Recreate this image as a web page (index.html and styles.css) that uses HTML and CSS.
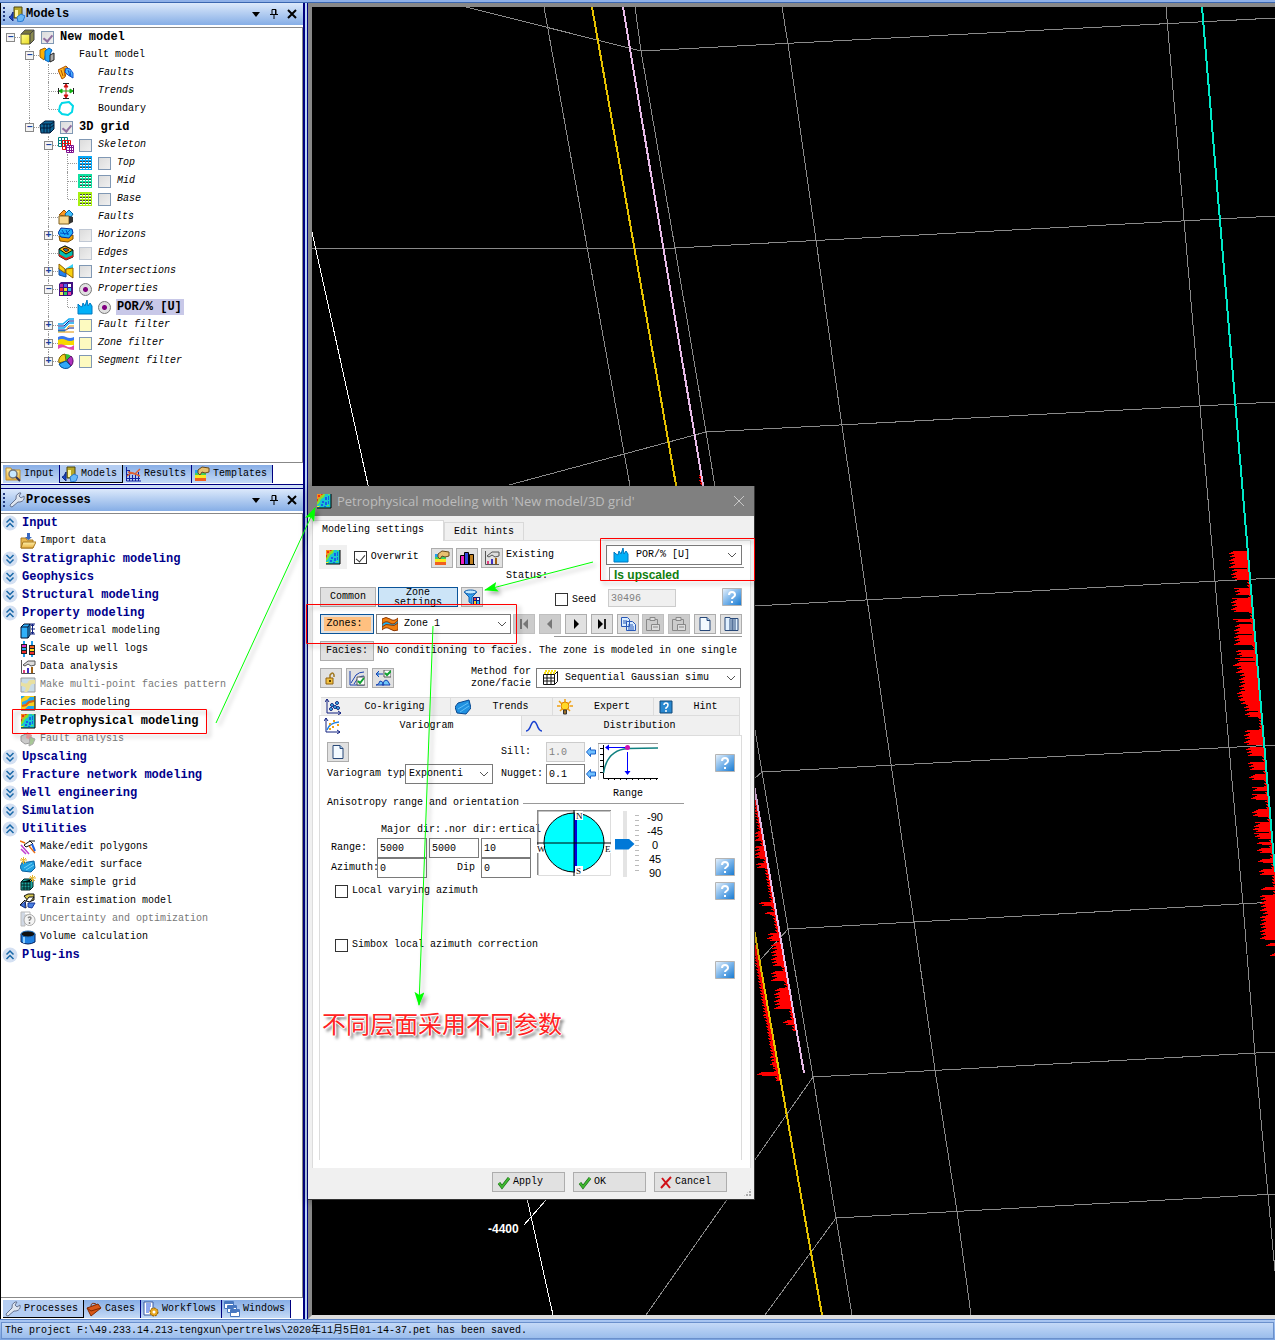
FILE: index.html
```html
<!DOCTYPE html>
<html lang="en">
<head>
<meta charset="utf-8">
<title>Petrophysical modeling</title>
<link rel="stylesheet" href="styles.css">
</head>
<body>
<svg class="defs" aria-hidden="true">
  <defs>
    <linearGradient id="g-help" x1="0" y1="0" x2="1" y2="1"><stop offset="0" stop-color="#e8f2fc"/><stop offset=".5" stop-color="#79b4ea"/><stop offset="1" stop-color="#1478d0"/></linearGradient>
    <linearGradient id="g-yel" x1="0" y1="0" x2="1" y2="1"><stop offset="0" stop-color="#ffff90"/><stop offset="1" stop-color="#e8d820"/></linearGradient>
    <linearGradient id="g-folder" x1="0" y1="0" x2="0" y2="1"><stop offset="0" stop-color="#fff0a8"/><stop offset="1" stop-color="#e8b040"/></linearGradient>
    <marker id="tip" viewBox="0 0 14 10" refX="13" refY="5" markerWidth="14" markerHeight="10" markerUnits="userSpaceOnUse" orient="auto"><path d="M14 5 0 0 3 5 0 10z" fill="#0f0" stroke="none"/></marker>
    <filter id="soft" x="-20%" y="-20%" width="140%" height="140%"><feDropShadow dx="3" dy="3" stdDeviation="2" flood-opacity=".35"/></filter>
  </defs>
  <symbol id="i-models" viewBox="0 0 16 16"><path d="M5 1h8v11H5z" fill="#b8a828" stroke="#4a4410"/><path d="M6 4h3v7H6z" fill="#fff6a0"/><path d="M4 6v9L1 12l-1-1 2-1z" fill="#1848c8" stroke="#102880"/><path d="M8 11l4-3 4 2-2 5-5 1z" fill="#68b8f8" stroke="#2878d0"/></symbol>
  <symbol id="i-cube" viewBox="0 0 16 16"><path d="M1 5h9v10H1z" fill="url(#g-yel)" stroke="#777020"/><path d="M1 5l4-4h9l-4 4z" fill="#77763a" stroke="#555"/><path d="M10 5l4-4v10l-4 4z" fill="#8a8a50" stroke="#444"/></symbol>
  <symbol id="i-faultmodel" viewBox="0 0 16 16"><path d="M1 3l5-2 2 2-3 10-4-3z" fill="#ffb000" stroke="#a06000"/><path d="M6 4l4-3 3 2-2 4 2 3-3 5-4-2z" fill="#28a8f8" stroke="#0060c0"/><path d="M11 8l4-2v7l-4 2z" fill="#aaa" stroke="#222"/></symbol>
  <symbol id="i-faults" viewBox="0 0 16 16"><path d="M0 5l8-4 2 2-3 9-3 2z" fill="#ffb820" stroke="#b05000"/><path d="M3 5l2 6M6 3l1 8" stroke="#b05000"/><path d="M8 3l4 1 3 4v5l-5-3-3-3z" fill="#50b8ff" stroke="#1050d0"/><path d="M10 5l2 6M12 6l1 6" stroke="#1050d0"/></symbol>
  <symbol id="i-trends" viewBox="0 0 16 16"><path d="M5 .5h6M5 15.500h6M.5 5v6M15.500 5v6" stroke="#222"/><path d="M8 2v12M6 4l2-3 2 3zM6 12l2 3 2-3z" stroke="#d01010" fill="#d01010"/><path d="M2 8h12M4 6L1 8l3 2zM12 6l3 2-3 2z" stroke="#10b010" fill="#10b010"/></symbol>
  <symbol id="i-boundary" viewBox="0 0 16 16"><path d="M4 2l7-1 4 4-1 6-4 3-6-1-3-3 1-5z" fill="#fff" stroke="#00d8e8" stroke-width="2"/></symbol>
  <symbol id="i-grid3d" viewBox="0 0 16 16"><path d="M1 6l5-4h9v8l-4 4H2z" fill="#106898" stroke="#001838"/><path d="M2 9h9M5 5v9M8 5v9M11 5v9M3 5h9l3-2M11 9l4-3" stroke="#001838" fill="none"/></symbol>
  <symbol id="i-skel" viewBox="0 0 16 16"><g fill="#fff"><path stroke="#008080" d="M.5.5h9v9h-9zM3.500.5v9M6.500.5v9M.5 3.500h9M.5 6.500h9"/><path stroke="#e01010" fill="none" d="M4.500 3.500h8v9h-8zM7.500 3.500v9M10.500 3.500v9M4.500 6.500h8M4.500 9.500h8"/><path stroke="#801090" d="M8.500 8.500h7v7h-7zM11.500 8.500v7M13.500 8.500v7M8.500 10.500h7M8.500 13.500h7"/></g></symbol>
  <symbol id="i-mesh" viewBox="0 0 16 16"><path d="M1 1h14v14H1z" fill="currentColor"/><g fill="none" stroke="#444"><path d="M3 4h11M3 7h11M3 10h11M3 13h11" stroke-width="2" stroke-dasharray="2 1"/><path d="M3 4.500h11M3 7.500h11M3 10.500h11M3 13.500h11" stroke="#fff" stroke-dasharray="2 1"/></g></symbol>
  <symbol id="i-faultbox" viewBox="0 0 16 16"><path d="M1 6l5-5 3 3-2 3z" fill="#ff9820" stroke="#905000"/><path d="M7 5l4-4 4 4-2 3H8z" fill="#40c0ff" stroke="#0060a0"/><path d="M1 7h10v8H1z" fill="#f8d890" stroke="#806020"/><path d="M11 7l4 1v5l-4 2z" fill="#333"/></symbol>
  <symbol id="i-horizons" viewBox="0 0 16 16"><path d="M1 9l4 1 6-1 4-1v4l-5 3-8-1z" fill="#f0a000" stroke="#805000"/><path d="M3 1l11 1 1 4-4 5-8-1-3-4z" fill="#20b0f8" stroke="#0030a0"/><path d="M4 3l3 5M8 3l2 5M12 3l-3 3M2 6l9 1" stroke="#0050c0"/></symbol>
  <symbol id="i-edges" viewBox="0 0 16 16"><path d="M1 4l6-3 8 4v7l-7 3-7-4z" fill="#00c0b0" stroke="#111"/><path d="M1 9l7 4 7-3v2l-7 3-7-4z" fill="#e02010"/><path d="M1 4l6-3 8 4-7 4z" fill="#f0c810" stroke="#111"/><path d="M5 4l3-1 3 2-3 2z" fill="#208080" stroke="#700"/></symbol>
  <symbol id="i-inter" viewBox="0 0 16 16"><path d="M1 2l6 4 8-5v4l-5 3-9-2z" fill="#30d0f8"/><path d="M1 5l7 2v7L1 12z" fill="#2080f0" stroke="#1050a0"/><path d="M1 1l6 5v4L1 6zM8 6l7-1v10l-7-5z" fill="#f8d010" stroke="#906000"/></symbol>
  <symbol id="i-props" viewBox="0 0 16 16"><path d="M1 3l2-2h12v12l-2 2H1z" fill="#401080"/><path d="M2 3h3v3H2z" fill="#c020a0"/><path d="M6 3h3v3H6z" fill="#5060f0"/><path d="M10 3h3v3h-3z" fill="#fff"/><path d="M2 7h3v3H2z" fill="#f03030"/><path d="M6 7h3v3H6z" fill="#f8e020"/><path d="M10 7h3v3h-3z" fill="#30c0f0"/><path d="M2 11h3v3H2z" fill="#f8f060"/><path d="M6 11h3v3H6z" fill="#30d060"/><path d="M10 11h3v3h-3z" fill="#f040a0"/></symbol>
  <symbol id="i-por" viewBox="0 0 16 16"><path d="M1 15V5l2 2 2 1 1-4 2 3 2-6 1 6 2-3 2 3v8z" fill="#00b0f8" stroke="#0078c0"/></symbol>
  <symbol id="i-ffilter" viewBox="0 0 16 16"><path d="M0 7h5l6-5h5M0 11h6l5-5h5M0 14h7" fill="none" stroke="#10a8f0" stroke-width="1.500"/><path d="M0 9h6l5-5h5M0 13h8l3-2h5" fill="none" stroke="#001890"/><path d="M8 13l3-4h5M0 15h16" fill="none" stroke="#e09000"/></symbol>
  <symbol id="i-zfilter" viewBox="0 0 16 16"><path d="M0 2q4-2 8 0t8 0v4H0z" fill="#3878f0"/><path d="M0 5q4-2 8 0t8 0v5H0z" fill="#f8d800"/><path d="M0 10q4-2 8 1t8-1v5q-4 0-8-2t-8 1z" fill="#e048b0"/></symbol>
  <symbol id="i-sfilter" viewBox="0 0 16 16"><circle cx="8" cy="8" r="7" fill="#30c040"/><path d="M8 8L7 1a7 7 0 0 0-6 9z" fill="#f0d020" stroke="#806000"/><path d="M8 8l-7 3a7 7 0 0 0 12 2z" fill="#30a8f8" stroke="#0050a0"/><path d="M9 7l4-4a7 7 0 0 1 0 10z" fill="#b030c0" stroke="#601070"/></symbol>
  <symbol id="i-search" viewBox="0 0 16 16"><path d="M1 2h5l1 2h8v10H1z" fill="url(#g-folder)" stroke="#c09030"/><circle cx="8" cy="8" r="4" fill="#c8e8ff" stroke="#777" stroke-width="1.500"/><path d="M11 11l4 4" stroke="#335" stroke-width="2"/></symbol>
  <symbol id="i-results" viewBox="0 0 16 16"><path d="M1.500 1v14H16M4.500 4v11M7.500 9v6M10.500 7v8M13.500 6v9M1 4.500h3M1 8.500h3M1 12.500h14" stroke="#1020a0" fill="none"/><path d="M2 10l4-3 4 1 5-5M3 6l5 1 7 3" stroke="#e06030" fill="none" stroke-width="1.500"/></symbol>
  <symbol id="i-templates" viewBox="0 0 16 16"><path d="M1 4h11v11H1z" fill="#f8e820"/><path d="M1 4h11v3H1z" fill="#20a0f0"/><path d="M1 7h11v2H1z" fill="#40d060"/><path d="M1 12h11v3H1z" fill="#f06020"/><path d="M4 4l4-3 7 1v4l-4 1-3-1-2 3-2-2z" fill="#e8c070" stroke="#6a4a18"/></symbol>
  <symbol id="i-wrench" viewBox="0 0 16 16"><path d="M1 13l6-6q-1-4 3-6l2 0-2 3 2 2 3-2q1 5-4 6l-2 0-6 5q-2 0-2-2z" fill="#dfe6f0" stroke="#667390"/></symbol>
  <symbol id="i-case" viewBox="0 0 16 16"><path d="M1 7l11-4 3 4-10 8z" fill="#d85818" stroke="#802800"/><path d="M1 7l4 3 10-3M5 5q0-4 5-2" fill="none" stroke="#802800"/></symbol>
  <symbol id="i-flow" viewBox="0 0 16 16"><path d="M1 1h9v13H1z" fill="#fff" stroke="#3858a0"/><path d="M3 3h5M3 5h5M3 7h4M3 9h4M3 11h3" stroke="#2050e0"/><circle cx="11" cy="11" r="4" fill="#e8a820" stroke="#805000" stroke-dasharray="2 1"/><circle cx="11" cy="11" r="1.500" fill="#fff"/></symbol>
  <symbol id="i-windows" viewBox="0 0 16 16"><g fill="#fff" stroke="#4878c0"><path d="M.5.5h9v7h-9zM3.500 4.500h9v7h-9zM6.500 8.500h9v7h-9z"/><path d="M1 2h8M4 6h8M7 10h8" stroke-width="2"/></g></symbol>
  <symbol id="i-up" viewBox="0 0 16 16"><circle cx="8" cy="8" r="7.500" fill="#d4e0f2"/><path d="M4.500 7.500L8 4l3.500 3.500M4.500 12L8 8.500l3.500 3.500" fill="none" stroke="#1868a8" stroke-width="1.500"/></symbol>
  <symbol id="i-down" viewBox="0 0 16 16"><circle cx="8" cy="8" r="7.500" fill="#d4e0f2"/><path d="M4.500 4L8 7.500 11.500 4M4.500 8.500L8 12l3.500-3.500" fill="none" stroke="#1868a8" stroke-width="1.500"/></symbol>
  <symbol id="i-import" viewBox="0 0 16 16"><path d="M1 5h5l1 2h6v8H1z" fill="#e8b850" stroke="#a87820"/><path d="M3 9h13l-3 6H1z" fill="url(#g-folder)" stroke="#a87820"/><path d="M7 0h3v4h2L8.500 7 5 4h2z" fill="#3868c0"/></symbol>
  <symbol id="i-geom" viewBox="0 0 16 16"><path d="M1 4l3-3h6v11l-2 3H1z" fill="#30b0f8" stroke="#001030"/><path d="M1 4h7v11M8 4l2-3" fill="none" stroke="#001030"/><path d="M10 1h5M10 11h5M12.500 1v10M11 3l1.500-2L14 3M11 9l1.500 2L14 9M11 6h4" stroke="#102080" fill="none"/></symbol>
  <symbol id="i-scale" viewBox="0 0 16 16"><path d="M4 0v16M12 0v16" stroke="#20a0f0" stroke-width="2"/><path d="M1 3h6v10H1zM9 4h6v10H9z" fill="#222"/><path d="M2 4h4v2H2z" fill="#e030d0"/><path d="M2 7h4v2H2z" fill="#30a0f0"/><path d="M2 10h4v2H2zM10 11h4v2h-4z" fill="#f03030"/><path d="M10 5h4v2h-4z" fill="#f06020"/><path d="M10 8h4v2h-4z" fill="#f8e020"/></symbol>
  <symbol id="i-data" viewBox="0 0 16 16"><path d="M1.500 1v13.500H15M1 5h1M1 8h1" stroke="#555" fill="none"/><path d="M3 11h2v3H3z" fill="#e04080"/><path d="M7 9h2v5H7z" fill="#4030c0"/><path d="M11 8h2v6h-2z" fill="#a06010"/><path d="M3 6l5-4h7v4l-4 1-3-2-3 2z" fill="#ddd" stroke="#555"/></symbol>
  <symbol id="i-multi" viewBox="0 0 16 16"><path d="M1 1h14v14H1z" fill="#c8dce8" stroke="#999"/><path d="M1 5q6 3 7 0t7-2v4q-4-1-5 3t-3 5H4q3-4 1-5t-4-1z" fill="#e8e0a0"/></symbol>
  <symbol id="i-facies" viewBox="0 0 16 16"><path d="M1 1h14v14H1z" fill="#f8d020"/><path d="M2 7l5-2 3-3h4v4l-4 2-8 2zM5 14l3-3h6v3zM1 1h4L1 4z" fill="#20a8f0"/><path d="M2 11l4-1 3-3 5-1" stroke="#e06010" fill="none" stroke-width="2"/><path d="M15 1v14H1" fill="none" stroke="#000"/></symbol>
  <symbol id="i-heat" viewBox="0 0 16 16"><path d="M1 1h14v14H1z" fill="#18c8d0"/><path d="M1 1h6L5 4 1 8z" fill="#f89018"/><path d="M2 2h2v2H2zM5 1h2v1H5zM1 6h1v3H1z" fill="#f03010"/><path d="M7 1h2L8 4 5 6l-2 4-2 2V9l3-4z" fill="#90e020"/><path d="M9 4h2v3H9zM12 3h1v4h-1zM6 8h2v2H6zM9 9h2v3H9zM5 11h2v2H5zM12 8h1v3h-1zM8 13h2v1H8z" fill="#1860e8"/><path d="M12 1h2v1h-2zM3 12h1v2H3zM11 12h2v1h-2z" fill="#60e060"/><path d="M1 13h2v1H1z" fill="#f8f020"/><path d="M15 1v14H1" fill="none" stroke="#000"/></symbol>
  <symbol id="i-fan" viewBox="0 0 16 16"><path d="M1 5l5-2 4 3v6l-5 1-4-3z" fill="#ccc" stroke="#999"/><path d="M7 1l5 3-1 5-5-2z" fill="#e8a0a0"/><path d="M10 6l5 2-2 5-4 2z" fill="#a8c898" stroke="#aaa"/></symbol>
  <symbol id="i-poly" viewBox="0 0 16 16"><path d="M1 6l8 9M1 10l5 5" stroke="#c040d0" stroke-width="1.500"/><path d="M4 6l6-4 3 3-7 3z" fill="#fff" stroke="#111"/><path d="M0 2l5 2M9 7l6 7" stroke="#f07010" stroke-width="1.500"/><path d="M12 5l3 7" stroke="#2060e0" stroke-width="2"/><path d="M9 2h6" stroke="#111"/></symbol>
  <symbol id="i-surf" viewBox="0 0 16 16"><path d="M2 6l12-2 1 7-4 4-9-1-2-4z" fill="#20a0e0" stroke="#0860a0"/><path d="M4 11l8-5M6 13l8-5" stroke="#70d0f8"/><path d="M0 3h7M3.500 0v7M1 1l5 5M6 1L1 6" stroke="#e8b830"/></symbol>
  <symbol id="i-sgrid" viewBox="0 0 16 16"><path d="M1 7l3-3h9v8l-3 3H1z" fill="#20a8a0" stroke="#022"/><path d="M1 10h9M4 7v8M7 7v8M10 7v8M1 7h9l3-3M2 13h8" stroke="#022"/><path d="M9 3h7M12.500 0v7M10 1l5 5M15 1l-5 5" stroke="#e8b830"/></symbol>
  <symbol id="i-train" viewBox="0 0 16 16"><path d="M4 3l4-2h6v6l-5 2z" fill="#d8c850" stroke="#111"/><path d="M6 8l3-4 5 0-4 5zM0 12l5-5 1 8z" fill="#fff" stroke="#111"/><path d="M1 12l4-3v6zM8 10h7l-3 5-4-1z" fill="#4880e0" stroke="#1838a0"/></symbol>
  <symbol id="i-unc" viewBox="0 0 16 16"><path d="M1 1h4v14H1z" fill="#d0d8e4"/><path d="M1 1h9v3H5v11H1z" fill="none" stroke="#bbb"/><circle cx="9.500" cy="9" r="5.500" fill="#f4f4f4" stroke="#aaa"/><path d="M8 7q2-2 3 0 0 1-1.500 2v1M9.500 11v2" stroke="#888" fill="none" stroke-width="1.500"/></symbol>
  <symbol id="i-vol" viewBox="0 0 16 16"><path d="M1 5v8q7 4 14 0V5z" fill="#2080e0" stroke="#002060"/><path d="M4 8v6" stroke="#90d0ff" stroke-width="2"/><ellipse cx="8" cy="5" rx="7" ry="3" fill="#111" stroke="#2070c0"/></symbol>
  <symbol id="i-bars" viewBox="0 0 16 16"><path d="M1 14.500h15" stroke="#000"/><path d="M1.500 5.500h4v9h-4z" fill="#f020c0" stroke="#000"/><path d="M5.500 2.500h4v12h-4z" fill="#3048e0" stroke="#000"/><path d="M10.500 4.500h4v10h-4z" fill="#c08020" stroke="#000"/></symbol>
  <symbol id="i-funnel" viewBox="0 0 16 16"><path d="M0 3l5 5v5l3 2V8l5-5z" fill="#30a0f0" stroke="#1060b0"/><ellipse cx="6.500" cy="3" rx="6" ry="2" fill="#c0e8ff" stroke="#1060b0"/><path d="M9 8h7v8H9z" fill="#102080"/><path d="M10 9h2v2h-2z" fill="#f04040"/><path d="M13 9h2v2h-2z" fill="#fff"/><path d="M10 12h2v3h-2z" fill="#f8d020"/><path d="M13 12h2v3h-2z" fill="#30c0f0"/></symbol>
  <symbol id="i-zone" viewBox="0 0 16 16"><path d="M0 3q4-3 8 0t8-1v12q-4 2-8-1t-8 1z" fill="#f08010" stroke="#903800"/><path d="M0 8q4-4 8-1t8-3v3q-4 4-8 2t-8 2z" fill="#20b0f0" stroke="#903800"/></symbol>
  <symbol id="i-prev" viewBox="0 0 16 16"><path d="M10 3v10L5 8z" fill="#777"/></symbol>
  <symbol id="i-first" viewBox="0 0 16 16"><path d="M12 3v10L7 8z" fill="#777"/><path d="M4 3h2v10H4z" fill="#777"/></symbol>
  <symbol id="i-next" viewBox="0 0 16 16"><path d="M6 3v10l5-5z" fill="#000"/></symbol>
  <symbol id="i-last" viewBox="0 0 16 16"><path d="M4 3v10l5-5z" fill="#000"/><path d="M10 3h2v10h-2z" fill="#222"/></symbol>
  <symbol id="i-copy" viewBox="0 0 16 16"><g fill="#d8ecff" stroke="#2858b8"><path d="M1.500 1.500h6l2 2v7h-8zM6.500 5.500h6l3 3v6h-9z"/><path d="M3 5h4M3 7h3M8 9h5M8 11h6M8 13h6"/></g></symbol>
  <symbol id="i-paste" viewBox="0 0 16 16"><g fill="#ccc" stroke="#888"><path d="M1.500 3.500h11v11h-11z"/><path d="M5 1.500h5v3H5zM6.500 8.500h8v6h-8zM8 11h5" fill="#ddd"/></g></symbol>
  <symbol id="i-page" viewBox="0 0 16 16"><path d="M3 1.500h7l3 3v10H3z" fill="#f4faff" stroke="#284878"/><path d="M10 1.500v3h3" fill="#9cc4ec" stroke="#284878"/></symbol>
  <symbol id="i-pages" viewBox="0 0 16 16"><g fill="#e0f0ff" stroke="#284878"><path d="M10 2.500h5v12h-5zM7 2.500h5v12H7zM2 1.500h5l2 2v11H2z"/></g></symbol>
  <symbol id="i-lock" viewBox="0 0 16 16"><path d="M7 8V5q3-4 4 0v2" fill="none" stroke="#a07820" stroke-width="1.500"/><path d="M3 8h7v6H3z" fill="#f0c040" stroke="#906010"/><path d="M6 10h2v2H6z" fill="#604000"/></symbol>
  <symbol id="i-fit" viewBox="0 0 16 16"><path d="M1 1v14h14M2 13l5-8q3-3 8-3M5 14l4-6q2-2 6-2" fill="none" stroke="#1840b0"/><path d="M8 7h8v8H8z" fill="#fff" stroke="#555"/><path d="M9 11l2 2 4-5" stroke="#10a030" fill="none" stroke-width="2"/></symbol>
  <symbol id="i-dist" viewBox="0 0 16 16"><path d="M1 4h7M4 1L1 4l3 3M1 15q3 0 4-4 3 0 4 4zM7 15q2-5 4-5t4 5z" fill="#70c8f8" stroke="#1840b0"/><path d="M9 0h7v7H9z" fill="#fff" stroke="#555"/><path d="M10 3l2 2 4-4" stroke="#10a030" fill="none" stroke-width="2"/></symbol>
  <symbol id="i-sgs" viewBox="0 0 16 16"><path d="M2 3h12M3 1h12" stroke="#f8e020" stroke-width="2" stroke-dasharray="2 1"/><path d="M1.500 4.500h11v10h-11zM5 4v10M9 4v10M1 8h11M1 11h11M12.500 4.500l3-3v10l-3 3" fill="none" stroke="#111"/></symbol>
  <symbol id="i-cokrig" viewBox="0 0 16 16"><path d="M2 0v14h14M0 3l2-3 2 3M13 12l3 2-3 2" fill="none" stroke="#102080"/><g fill="#40c8f8" stroke="#102080"><circle cx="6" cy="10" r="1.500"/><circle cx="7" cy="6" r="1.500"/><circle cx="10" cy="8" r="1.500"/><circle cx="12" cy="4" r="1.500"/><circle cx="13" cy="9" r="1.500"/></g></symbol>
  <symbol id="i-trend" viewBox="0 0 16 16"><path d="M3 4l11-3 2 8-5 6-9-1-2-6z" fill="#2090e0" stroke="#084890"/><path d="M3 10l10-6M5 13l9-6" stroke="#60c0f8"/></symbol>
  <symbol id="i-bulb" viewBox="0 0 16 16"><path d="M8 0v3M0 7h3M13 7h3M2 2l3 3M14 2l-3 3M3 12l2-2M13 12l-2-2" stroke="#f0a010" stroke-width="1.500"/><circle cx="8" cy="7" r="4" fill="#ffd828" stroke="#e08000"/><path d="M6.500 11h3v4h-3z" fill="#a07020" stroke="#333"/></symbol>
  <symbol id="i-hint" viewBox="0 0 16 16"><path d="M2 2h12v12H2z" fill="#2888d0" stroke="#104878"/><path d="M6 6q0-2 2-2t2 2-2 3v1M8 11v2" stroke="#fff" fill="none" stroke-width="1.500"/></symbol>
  <symbol id="i-vario" viewBox="0 0 16 16"><path d="M2 0v14h14M0 3l2-3 2 3M13 12l3 2-3 2" fill="none" stroke="#102080"/><path d="M3 12q2-7 12-8" fill="none" stroke="#2080e0" stroke-width="1.500"/><path d="M5 5h2v2H5zM8 8h2v2H8zM9 2h2v2H9zM13 6h2v2h-2zM5 10h2v2H5z" fill="#f0a010"/></symbol>
  <symbol id="i-bell" viewBox="0 0 16 16"><path d="M0 13q3 0 5-6 3-7 6 0 2 6 5 6" fill="none" stroke="#1840d0" stroke-width="1.500"/></symbol>
  <symbol id="i-check" viewBox="0 0 16 16"><path d="M3 9l3 4 7-9" fill="none" stroke="#186818" stroke-width="3"/><path d="M3 9l3 4 7-9" fill="none" stroke="#40b830" stroke-width="2"/></symbol>
  <symbol id="i-cross" viewBox="0 0 16 16"><path d="M4 4l8 10M13 3L3 14" stroke="#d01018" stroke-width="2"/></symbol>
  <symbol id="i-chev" viewBox="0 0 10 6"><path d="M1 1l4 4 4-4" fill="none" stroke="#555"/></symbol>
  <symbol id="i-larrow" viewBox="0 0 10 10"><path d="M.5 5l4-4.500v2.500h5v4h-5v2.500z" fill="#70c0ff" stroke="#1860c8"/></symbol>
  <symbol id="i-help" viewBox="0 0 20 18"><path d="M.5.5h19v17H.5z" fill="url(#g-help)" stroke="#b4b4b4"/><path d="M7 7q0-3 3-3t3 3q0 1-1.500 2T10 11M10 13v2" fill="none" stroke="#fff" stroke-width="2"/></symbol>
  <symbol id="i-menu" viewBox="0 0 10 10"><path d="M1 3h8L5 8z"/></symbol>
  <symbol id="i-pin" viewBox="0 0 10 10"><path d="M3 .5h4v5H3zM1 5.500h8M5 5.500V10M6.500 1v4" fill="none" stroke="#000"/></symbol>
  <symbol id="i-x" viewBox="0 0 10 10"><path d="M1 1l8 8M9 1L1 9" stroke="#000" stroke-width="2"/></symbol>
</svg>

<div class="app">
  <div class="topbar"></div>
  <main class="work">
    <aside class="dock">
      <header class="bar"><i class="grip"></i><svg class="ic"><use href="#i-models"/></svg><h2>Models</h2>
        <button aria-label="Menu"><svg><use href="#i-menu"/></svg></button><button aria-label="Pin"><svg><use href="#i-pin"/></svg></button><button aria-label="Close"><svg><use href="#i-x"/></svg></button></header>
      <ul class="tree">
        <li><div class="row"><button class="exp">−</button><svg class="ic"><use href="#i-cube"/></svg><input type="checkbox" class="cb" aria-label="New model" checked><b>New model</b></div>
          <ul>
            <li><div class="row"><button class="exp">−</button><svg class="ic"><use href="#i-faultmodel"/></svg><i class="cb-gap"></i><span>Fault model</span></div>
              <ul>
                <li><div class="row"><i class="exp-gap"></i><svg class="ic"><use href="#i-faults"/></svg><i class="cb-gap"></i><em>Faults</em></div></li>
                <li><div class="row"><i class="exp-gap"></i><svg class="ic"><use href="#i-trends"/></svg><i class="cb-gap"></i><em>Trends</em></div></li>
                <li><div class="row"><i class="exp-gap"></i><svg class="ic"><use href="#i-boundary"/></svg><i class="cb-gap"></i><span>Boundary</span></div></li>
              </ul></li>
            <li><div class="row"><button class="exp">−</button><svg class="ic"><use href="#i-grid3d"/></svg><input type="checkbox" class="cb" aria-label="3D grid" checked><b>3D grid</b></div>
              <ul>
                <li><div class="row"><button class="exp">−</button><svg class="ic"><use href="#i-skel"/></svg><input type="checkbox" class="cb" aria-label="Skeleton"><em>Skeleton</em></div>
                  <ul>
                    <li><div class="row"><i class="exp-gap"></i><svg class="ic mesh-top"><use href="#i-mesh"/></svg><input type="checkbox" class="cb" aria-label="Top"><em>Top</em></div></li>
                    <li><div class="row"><i class="exp-gap"></i><svg class="ic mesh-mid"><use href="#i-mesh"/></svg><input type="checkbox" class="cb" aria-label="Mid"><em>Mid</em></div></li>
                    <li><div class="row"><i class="exp-gap"></i><svg class="ic mesh-base"><use href="#i-mesh"/></svg><input type="checkbox" class="cb" aria-label="Base"><em>Base</em></div></li>
                  </ul></li>
                <li><div class="row"><i class="exp-gap"></i><svg class="ic"><use href="#i-faultbox"/></svg><i class="cb-gap"></i><em>Faults</em></div></li>
                <li><div class="row"><button class="exp">+</button><svg class="ic"><use href="#i-horizons"/></svg><input type="checkbox" class="cb dim" aria-label="Horizons"><em>Horizons</em></div></li>
                <li><div class="row"><i class="exp-gap"></i><svg class="ic"><use href="#i-edges"/></svg><input type="checkbox" class="cb dim" aria-label="Edges"><em>Edges</em></div></li>
                <li><div class="row"><button class="exp">+</button><svg class="ic"><use href="#i-inter"/></svg><input type="checkbox" class="cb" aria-label="Intersections"><em>Intersections</em></div></li>
                <li><div class="row"><button class="exp">−</button><svg class="ic"><use href="#i-props"/></svg><input type="radio" name="props" class="rb" aria-label="Properties" checked><em>Properties</em></div>
                  <ul><li><div class="row"><i class="exp-gap"></i><svg class="ic"><use href="#i-por"/></svg><input type="radio" name="por" class="rb" aria-label="POR/% [U]" checked><b class="sel">POR/% [U]</b></div></li></ul></li>
                <li><div class="row"><button class="exp">+</button><svg class="ic"><use href="#i-ffilter"/></svg><input type="checkbox" class="cb yel" aria-label="Fault filter"><em>Fault filter</em></div></li>
                <li><div class="row"><button class="exp">+</button><svg class="ic"><use href="#i-zfilter"/></svg><input type="checkbox" class="cb yel" aria-label="Zone filter"><em>Zone filter</em></div></li>
                <li><div class="row"><button class="exp">+</button><svg class="ic"><use href="#i-sfilter"/></svg><input type="checkbox" class="cb yel" aria-label="Segment filter"><em>Segment filter</em></div></li>
              </ul></li>
          </ul></li>
      </ul>
      <nav class="tabs"><button><svg class="ic"><use href="#i-search"/></svg>Input</button><button class="on"><svg class="ic"><use href="#i-models"/></svg>Models</button><button><svg class="ic"><use href="#i-results"/></svg>Results</button><button><svg class="ic"><use href="#i-templates"/></svg>Templates</button></nav>
      <div class="hsplit"></div>
      <header class="bar"><i class="grip"></i><svg class="ic"><use href="#i-wrench"/></svg><h2>Processes</h2>
        <button aria-label="Menu"><svg><use href="#i-menu"/></svg></button><button aria-label="Pin"><svg><use href="#i-pin"/></svg></button><button aria-label="Close"><svg><use href="#i-x"/></svg></button></header>
      <ul class="procs">
        <li class="grp"><svg class="ic"><use href="#i-up"/></svg>Input</li>
        <li><svg class="ic"><use href="#i-import"/></svg>Import data</li>
        <li class="grp"><svg class="ic"><use href="#i-down"/></svg>Stratigraphic modeling</li>
        <li class="grp"><svg class="ic"><use href="#i-down"/></svg>Geophysics</li>
        <li class="grp"><svg class="ic"><use href="#i-down"/></svg>Structural modeling</li>
        <li class="grp"><svg class="ic"><use href="#i-up"/></svg>Property modeling</li>
        <li><svg class="ic"><use href="#i-geom"/></svg>Geometrical modeling</li>
        <li><svg class="ic"><use href="#i-scale"/></svg>Scale up well logs</li>
        <li><svg class="ic"><use href="#i-data"/></svg>Data analysis</li>
        <li class="off"><svg class="ic"><use href="#i-multi"/></svg>Make multi-point facies pattern</li>
        <li><svg class="ic"><use href="#i-facies"/></svg>Facies modeling</li>
        <li class="cur"><svg class="ic"><use href="#i-heat"/></svg>Petrophysical modeling</li>
        <li class="off"><svg class="ic"><use href="#i-fan"/></svg>Fault analysis</li>
        <li class="grp"><svg class="ic"><use href="#i-down"/></svg>Upscaling</li>
        <li class="grp"><svg class="ic"><use href="#i-down"/></svg>Fracture network modeling</li>
        <li class="grp"><svg class="ic"><use href="#i-down"/></svg>Well engineering</li>
        <li class="grp"><svg class="ic"><use href="#i-down"/></svg>Simulation</li>
        <li class="grp"><svg class="ic"><use href="#i-up"/></svg>Utilities</li>
        <li><svg class="ic"><use href="#i-poly"/></svg>Make/edit polygons</li>
        <li><svg class="ic"><use href="#i-surf"/></svg>Make/edit surface</li>
        <li><svg class="ic"><use href="#i-sgrid"/></svg>Make simple grid</li>
        <li><svg class="ic"><use href="#i-train"/></svg>Train estimation model</li>
        <li class="off"><svg class="ic"><use href="#i-unc"/></svg>Uncertainty and optimization</li>
        <li><svg class="ic"><use href="#i-vol"/></svg>Volume calculation</li>
        <li class="grp"><svg class="ic"><use href="#i-up"/></svg>Plug-ins</li>
      </ul>
      <nav class="tabs low"><button class="on"><svg class="ic"><use href="#i-wrench"/></svg>Processes</button><button><svg class="ic"><use href="#i-case"/></svg>Cases</button><button><svg class="ic"><use href="#i-flow"/></svg>Workflows</button><button><svg class="ic"><use href="#i-windows"/></svg>Windows</button></nav>
    </aside>
    <div class="vsplit"></div>
    <section class="view">
      <svg class="scene" shape-rendering="crispEdges">
        <g transform="translate(-312 -7)" fill="none">
          <g stroke="#8a8a8a">
            <path d="M466 7L641 51 1275 18M312 248H675L1275 216M509 485L706 432 1275 402M754 606L1180 583 1275 578M754 779l8-7L1275 745M754 967L788 929 1275 902M1275 1052L813 1077 646 1315M1275 1194L836 1218 765 1315"/>
            <path d="M544 7L630 486M635 7L641 51 675 248 706 432 762 772 788 929 813 1077 836 1218 852 1315M782 7L788 44 816 240 842 426 891 764 914 922 935 1070 957 1211 971 1315M1166 7L1184 220 1200 406 1215 581 1229 747 1243 904 1255 1055 1268 1195 1279 1315"/>
          </g>
          <path d="M312 232L368 485 553 1315M524 1225L546 1200" stroke="#fff"/>
          <path id="logs" stroke="#f00"/>
          <path d="M592 7L676 485 754 929 822 1315" stroke="#e6c200" stroke-width="2"/>
          <path d="M623 7L703 485 754 785 804 1073" stroke="#e8bce8" stroke-width="2"/>
          <path d="M1202 7L1243 495 1275 872" stroke="#00e8c8" stroke-width="2"/>
          <text x="488" y="1233" class="depth">-4400</text>
        </g>
      </svg>
    </section>
  </main>
  <footer class="status"><span>The project F:\49.233.14.213-tengxun\pertrelws\2020年11月5日01-14-37.pet has been saved.</span></footer>

  <section class="dialog" role="dialog" aria-labelledby="dlg-title">
    <header class="dlg-head"><svg class="ic"><use href="#i-heat"/></svg><h1 id="dlg-title">Petrophysical modeling with 'New model/3D grid'</h1><button aria-label="Close"><svg viewBox="0 0 12 12"><path d="M1 1l10 10M11 1L1 11" stroke="#c8c8c8"/></svg></button></header>
    <div class="dlg-tabs"><button class="on">Modeling settings</button><button>Edit hints</button></div>
    <div class="page">
      <div class="r-top">
        <span class="cell"><svg class="ic"><use href="#i-heat"/></svg></span>
        <label class="chk"><input type="checkbox" checked>Overwrit</label>
        <div class="tools"><button class="tb"><svg class="ic"><use href="#i-templates"/></svg></button><button class="tb"><svg class="ic"><use href="#i-bars"/></svg></button><button class="tb"><svg class="ic"><use href="#i-data"/></svg></button></div>
        <div class="names"><label for="prop">Existing</label><span>Status:</span></div>
        <div class="vals"><div class="combo"><svg class="ic"><use href="#i-por"/></svg><select id="prop"><option>POR/% [U]</option></select><svg class="chev"><use href="#i-chev"/></svg></div><output>Is upscaled</output></div>
      </div>
      <div class="r-mode">
        <button class="tb common">Common</button><button class="tb zset">Zone settings</button><button class="tb"><svg class="ic"><use href="#i-funnel"/></svg></button>
        <label class="chk seed"><input type="checkbox">Seed</label><input class="fld seedv" aria-label="Seed value" value="30496" disabled>
        <button class="help" aria-label="Help"><svg><use href="#i-help"/></svg></button>
      </div>
      <div class="r-zone">
        <button class="tb zones"><span>Zones:</span></button>
        <div class="combo zc"><svg class="ic"><use href="#i-zone"/></svg><select aria-label="Zone"><option>Zone 1</option></select><svg class="chev"><use href="#i-chev"/></svg></div>
        <div class="nav"><button class="tb dis"><svg class="ic"><use href="#i-first"/></svg></button><button class="tb dis"><svg class="ic"><use href="#i-prev"/></svg></button><button class="tb"><svg class="ic"><use href="#i-next"/></svg></button><button class="tb"><svg class="ic"><use href="#i-last"/></svg></button><button class="tb"><svg class="ic"><use href="#i-copy"/></svg></button><button class="tb dis"><svg class="ic"><use href="#i-paste"/></svg></button><button class="tb dis"><svg class="ic"><use href="#i-paste"/></svg></button><button class="tb"><svg class="ic"><use href="#i-page"/></svg></button><button class="tb"><svg class="ic"><use href="#i-pages"/></svg></button></div>
      </div>
      <hr class="rule">
      <div class="r-facies"><button class="tb">Facies:</button><span>No conditioning to facies. The zone is modeled in one single</span></div>
      <div class="r-method">
        <button class="tb"><svg class="ic"><use href="#i-lock"/></svg></button><button class="tb"><svg class="ic"><use href="#i-fit"/></svg></button><button class="tb"><svg class="ic"><use href="#i-dist"/></svg></button>
        <label for="method">Method for zone/facie</label>
        <div class="combo mc"><svg class="ic"><use href="#i-sgs"/></svg><select id="method"><option>Sequential Gaussian simu</option></select><svg class="chev"><use href="#i-chev"/></svg></div>
      </div>
      <div class="sub-tabs"><button><svg class="ic"><use href="#i-cokrig"/></svg><span>Co-kriging</span></button><button><svg class="ic"><use href="#i-trend"/></svg><span>Trends</span></button><button><svg class="ic"><use href="#i-bulb"/></svg><span>Expert</span></button><button><svg class="ic"><use href="#i-hint"/></svg><span>Hint</span></button></div>
      <div class="sub-tabs second"><button class="on"><svg class="ic"><use href="#i-vario"/></svg><span>Variogram</span></button><button><svg class="ic"><use href="#i-bell"/></svg><span>Distribution</span></button></div>
      <div class="form">
        <div class="f-top">
          <div class="v-left"><button class="tb"><svg class="ic"><use href="#i-page"/></svg></button>
            <div class="v-type"><label for="vtype">Variogram typ</label><div class="combo"><select id="vtype"><option>Exponenti</option></select><svg class="chev"><use href="#i-chev"/></svg></div></div></div>
          <div class="v-num"><label for="sill">Sill:</label><input id="sill" class="fld" value="1.0" disabled><svg class="la"><use href="#i-larrow"/></svg>
            <label for="nugget">Nugget:</label><input id="nugget" class="fld" value="0.1"><svg class="la"><use href="#i-larrow"/></svg></div>
          <figure><svg viewBox="0 0 60 38"><path d="M0 37V.5h60" stroke="#999" fill="none"/><path d="M5.500 2v33.500H60M2 5.500h3M2 11.500h3M2 17.500h3M2 23.500h3M2 29.500h3M10.500 35v2M16.500 35v2M22.500 35v2M28.500 35v2M34.500 35v2M40.500 35v2M46.500 35v2M52.500 35v2M58.500 35v2" stroke="#000" fill="none"/><path d="M5.500 30Q9 7 30 5.500L60 5" stroke="#108080" fill="none" stroke-width="1.500"/><path d="M28 4.500H9M29.500 9v21" stroke="#00f"/><path d="M7 4.500l4-3v6zM29.500 32l-3-4h6z" fill="#00f"/><circle cx="29.500" cy="4.500" r="2.500" fill="#d010b0"/></svg><figcaption>Range</figcaption></figure>
          <button class="help" aria-label="Help"><svg><use href="#i-help"/></svg></button>
        </div>
        <div class="legend"><span>Anisotropy range and orientation</span><hr></div>
        <div class="f-aniso">
          <div class="axes">
            <div class="heads"><span>Major dir:</span><span>.nor dir:</span><span>ertical</span></div>
            <div class="dirs">
              <label for="rmaj">Range:</label><input id="rmaj" class="fld" value="5000"><input class="fld" aria-label="Minor range" value="5000"><input class="fld" aria-label="Vertical range" value="10">
              <label for="azi">Azimuth:</label><input id="azi" class="fld" value="0"><label class="dip" for="dip">Dip</label><input id="dip" class="fld" value="0">
            </div>
          </div>
          <svg class="compass" viewBox="0 0 74 66"><path d="M.5 65V.5H74" fill="none" stroke="#888" stroke-width="2"/><path d="M73.500 1v64.500H1" fill="none" stroke="#ddd"/><ellipse cx="37" cy="32.500" rx="30" ry="29.500" fill="#0ff" stroke="#000"/><path d="M38.500 4v58" stroke="#00d" stroke-width="3"/><path d="M37 0v66M0 33h74" stroke="#000"/><path d="M38 1h8v9h-8zM38 56h8v9h-8zM68 35h6v8h-6zM0 35h7v8H0z" fill="#fff"/><text x="39" y="9">N</text><text x="39" y="64">S</text><text x="68" y="42">E</text><text x="0" y="42">W</text></svg>
          <input type="range" class="slide" min="-90" max="90" value="0" aria-label="Azimuth">
          <i class="ticks"></i>
          <div class="scale"><span>-90</span><span>-45</span><span>0</span><span>45</span><span>90</span></div>
          <button class="help" aria-label="Help"><svg><use href="#i-help"/></svg></button>
        </div>
        <div class="f-opt"><label class="chk"><input type="checkbox">Local varying azimuth</label><button class="help" aria-label="Help"><svg><use href="#i-help"/></svg></button></div>
        <div class="f-opt simbox"><label class="chk"><input type="checkbox">Simbox local azimuth correction</label></div>
        <div class="f-opt"><button class="help" aria-label="Help"><svg><use href="#i-help"/></svg></button></div>
      </div>
    </div>
    <footer class="dlg-foot"><button class="tb"><svg class="ic"><use href="#i-check"/></svg>Apply</button><button class="tb"><svg class="ic"><use href="#i-check"/></svg>OK</button><button class="tb"><svg class="ic"><use href="#i-cross"/></svg>Cancel</button><i class="resize"></i></footer>
  </section>

  <svg class="marks" aria-hidden="true" fill="none">
    <g filter="url(#soft)" stroke="#f00"><path d="M12.500 709.500h194v24h-194zM600.500 538.500h154v42h-154zM306.500 604.500h210v39h-210z"/></g>
    <g filter="url(#soft)" stroke="#0f0"><path d="M216 723L315 508" marker-end="url(#tip)"/><path d="M593 562L485 590" marker-end="url(#tip)"/><path d="M433 626L419 1005" marker-end="url(#tip)"/></g>
  </svg>
  <p class="note" lang="zh">不同层面采用不同参数</p>
</div>
<script src="logs.js"></script>
</body>
</html>
```
FILE: styles.css
```css
* { box-sizing: border-box; }
body { margin: 0; font: 10px/14px "Liberation Mono", "Noto Sans CJK SC", monospace; color: #000; background: #fff; }
button, input, select { font: inherit; color: inherit; margin: 0; padding: 0; border-radius: 0; }
button { border: 0; background: none; }
ul { list-style: none; margin: 0; padding: 0; }
h1, h2, p, figure { margin: 0; }
.defs { position: absolute; width: 0; height: 0; }
.ic { width: 16px; height: 16px; flex: none; display: block; }

.app { position: relative; min-height: 100vh; display: flex; flex-direction: column; overflow: hidden; }
.topbar { height: 3px; background: #8eb0e8; border-bottom: 1px solid #3a66b0; }
.work { flex: 1; display: flex; }
.dock { width: 303px; display: flex; flex-direction: column; border-left: 1px solid #000; }
.vsplit { width: 5px; background: #bcd5f8; border: solid #00007f; border-width: 0 1px 0 2px; }
.view { flex: 1; min-width: 0; display: flex; background: #000; border: solid #888; border-width: 4px 0 0 4px; border-bottom: 4px solid #ddd; }
.scene { flex: 1; width: 100%; height: auto; display: block; }
.depth { fill: #fff; font: bold 12px "Liberation Sans", sans-serif; }

.bar { height: 22px; display: flex; align-items: center; padding: 0 2px 0 2px; background: linear-gradient(#dce9fb, #86aee6); }
.bar .grip { width: 6px; height: 14px; background: radial-gradient(circle at 1px 1px, #223a80 1px, transparent 1px) 0 0 / 6px 4px; }
.bar h2 { flex: 1; font-size: 12px; line-height: 14px; padding-left: 1px; }
.bar button { width: 18px; height: 16px; display: grid; place-items: center; }
.bar button svg { width: 10px; height: 10px; display: block; }

.tree { margin-top: 2px; padding: 0 0 92px 5px; border-top: 1px solid #888; border-right: 1px solid #888; border-bottom: 1px solid #888; }
.tree ul { padding-left: 19px; }
.tree li { position: relative; }
.tree ul li::before { content: ""; position: absolute; left: 4px; top: 0; bottom: 0; border-left: 1px dotted #999; }
.tree ul li:last-child::before { bottom: auto; height: 9px; }
.row { position: relative; height: 18px; display: flex; align-items: center; }
.row::after { content: ""; position: absolute; left: 5px; width: 9px; top: 9px; border-top: 1px dotted #999; }
.exp { position: relative; z-index: 1; width: 9px; height: 9px; border: 1px solid #888; background: #f4f4f4; color: #1840a0; line-height: 7px; font-weight: bold; margin-right: 5px; }
.exp-gap { width: 14px; }
.row .ic { position: relative; z-index: 1; }
.row b, .row span, .row em { margin-left: 6px; }
.row b { font-size: 12px; }
.row .sel { background: #c8c8e8; margin-left: 5px; padding: 0 2px 0 1px; line-height: 16px; }
.cb { appearance: none; width: 13px; height: 13px; margin-left: 5px; border: 1px solid #8098b4; background: linear-gradient(135deg, #dcdcdc, #f0f0f0); display: grid; place-items: center; }
.cb.dim { border-color: #c0c8d4; }
.cb.yel { background: #fdfac0; }
.cb:checked::after { content: ""; width: 4px; height: 7px; border: solid #9070a0; border-width: 0 2px 2px 0; transform: rotate(40deg); }
.cb-gap { width: 18px; }
.rb { appearance: none; width: 13px; height: 13px; margin-left: 5px; border: 1px solid #777; border-radius: 50%; background: radial-gradient(circle, #800080 0 2px, #e0e0e0 3px); }
.mesh-top { color: #08a8f8; }
.mesh-mid { color: #10e0a0; }
.mesh-base { color: #a8f010; }

.tabs { height: 21px; display: flex; padding: 2px 0 1px 2px; background: #fff; }
.tabs button { display: flex; align-items: center; gap: 3px; padding: 0 5px 0 2px; background: linear-gradient(#88aee6, #c4daf6); border-right: 1px solid #00007f; }
.tabs .on { background: #b4cdf2; border-right: 1px solid #000; border-bottom: 1px solid #000; }
.hsplit { height: 5px; background: #cfe0f8; border: solid #00007f; border-width: 1px 0; }
.procs { flex: 1; margin-top: 2px; padding: 0 0 0 19px; border: 1px solid #888; border-left: 0; }
.procs li { height: 18px; display: flex; align-items: center; gap: 4px; }
.procs .grp { margin-left: -18px; color: #00008b; font-size: 12px; font-weight: bold; }
.procs .off { color: #777; }
.procs .cur { font-size: 12px; font-weight: bold; }
.status { height: 21px; padding: 2px 1px; background: linear-gradient(#a9c6f2, #7da5e0); border-top: 1px solid #5a82c4; }
.status span { display: block; height: 17px; line-height: 15px; padding-left: 3px; border: 1px solid #6a90cc; background: linear-gradient(#c4d9f7, #9abdec); overflow: hidden; }

.dialog { position: absolute; left: 308px; top: 486px; width: 447px; background: #f0f0f0; border-right: 1px solid #333; border-bottom: 1px solid #333; box-shadow: 0 2px 8px rgba(0,0,0,.4); }
.dlg-head { height: 30px; display: flex; align-items: center; gap: 5px; padding: 0 9px 0 8px; background: #808080; }
.dlg-head h1 { flex: 1; font: 13px/18px "Open Sans", sans-serif; color: #bcbcbc; white-space: nowrap; }
.dlg-head button svg { width: 12px; height: 12px; display: block; }
.dlg-tabs { height: 24px; padding: 4px 4px 0; display: flex; align-items: flex-end; }
.dlg-tabs button { height: 18px; padding: 0 9px; border: 1px solid #d9d9d9; border-bottom: 0; }
.dlg-tabs .on { height: 21px; padding: 0 19px 2px 9px; background: #fff; margin-bottom: -1px; position: relative; }
.page { margin: 0 3px 0 4px; padding: 4px 8px 8px 6px; background: #fff; border: solid #dcdcdc; border-width: 1px 1px 0 1px; }

.tb { height: 20px; min-width: 22px; display: inline-grid; place-items: center; padding: 0 2px; border: 1px solid #adadad; background: #e1e1e1; flex: none; }
.tb.dis { background: #ccc; border-color: #bfbfbf; }
.chk { display: flex; align-items: center; gap: 4px; white-space: nowrap; }
.chk input { appearance: none; width: 13px; height: 13px; border: 1px solid #333; background: #fff; display: grid; place-items: center; }
.chk input:checked::after { content: ""; width: 4px; height: 8px; border: solid #333; border-width: 0 1px 1px 0; transform: rotate(40deg); }
.combo { height: 20px; display: flex; align-items: center; gap: 7px; padding: 0 4px 0 6px; border: 1px solid #7a7a7a; background: #fff; }
.combo select { appearance: none; flex: 1; min-width: 0; border: 0; background: none; height: 14px; line-height: 14px; }
.chev { width: 10px; height: 6px; flex: none; pointer-events: none; }
.fld { height: 20px; min-width: 0; border: 1px solid #7a7a7a; background: #fff; padding: 0 2px; font-size: 10px; }
.fld:disabled { background: #f0f0f0; border-color: #ccc; color: #808080; }
.help { margin-left: auto; }
.help svg { width: 20px; height: 18px; display: block; }

.r-top { display: flex; height: 38px; align-items: flex-start; }
.cell { width: 28px; height: 24px; display: grid; place-items: center; background: #f0f0f0; margin-right: 7px; }
.r-top .chk { margin-top: 5px; width: 78px; }
.tools { display: flex; gap: 3px; margin-top: 3px; width: 76px; }
.names { display: grid; gap: 7px; margin-top: 3px; width: 101px; }
.vals { width: 136px; }
.vals output { display: block; width: 135px; margin: 2px 0 0 3px; height: 14px; padding-left: 4px; border: solid #888; border-width: 1px 0 0 1px; font: bold 12px/14px "Liberation Sans", sans-serif; color: #108010; }
.r-mode { display: flex; align-items: center; height: 24px; margin-top: 2px; }
.common { width: 56px; margin: 0 2px 0 1px; }
.zset { width: 80px; background: #cce4f7; border-color: #0a5499; line-height: 10px; margin-right: 3px; padding: 0 12px; }
.seed { margin-left: 72px; margin-top: 5px; width: 53px; }
.seedv { width: 68px; height: 18px; margin-top: 2px; }
.r-zone { display: flex; align-items: center; height: 24px; margin-top: 3px; }
.rule { width: 188px; margin: 0 0 0 auto; border: 0; border-top: 1px solid #999; }
.zones { width: 54px; margin: 0 2px 0 1px; border-color: #0a5499; }
.zones span { background: #ffc080; padding: 0 5px 0 3px; width: 47px; text-align: left; }
.zc { width: 135px; gap: 6px; padding: 0 3px 0 5px; }
.nav { flex: 1; display: flex; justify-content: space-between; padding-left: 2px; }
.r-facies { display: flex; align-items: center; height: 22px; margin-top: 3px; gap: 3px; padding-left: 1px; white-space: nowrap; }
.r-facies .tb { width: 54px; }
.r-method { display: flex; align-items: center; height: 28px; margin-top: 2px; gap: 4px; padding-left: 1px; }
.r-method label { width: 133px; padding-left: 70px; text-align: right; line-height: 12px; margin-right: 1px; }
.mc { flex: 1; margin-right: 1px; padding-left: 5px; }

.sub-tabs { display: grid; grid-template-columns: 130px 102px 101px 1fr; height: 18px; margin: 5px 2px 0; }
.sub-tabs button { display: flex; align-items: center; padding: 0 4px; background: #f0f0f0; border: 1px solid #dcdcdc; border-width: 1px 1px 0 0; }
.sub-tabs span { flex: 1; text-align: center; padding-left: 2px; }
.second { grid-template-columns: 203px 1fr; height: 20px; margin: 0 2px 0 0; position: relative; }
.second .on { background: #fff; border-left-width: 1px; margin-bottom: -1px; }
.second .on span { padding-right: 6px; }
.form { border: solid #dcdcdc; border-width: 1px 1px 0 1px; padding: 6px 6px 177px 7px; }
.f-top { display: flex; align-items: flex-start; height: 60px; }
.v-left { width: 166px; margin-right: 8px; }
.v-left > .tb { display: grid; }
.v-type { display: flex; align-items: center; margin-top: 2px; white-space: nowrap; }
.v-type label { width: 78px; }
.v-type .combo { width: 88px; padding: 0 3px; }
.v-num { display: grid; grid-template-columns: 44px 39px 10px; row-gap: 2px; column-gap: 1px; align-items: center; }
.la { width: 10px; height: 10px; }
.f-top figure { margin-left: 2px; width: 60px; text-align: center; }
.f-top figure svg { width: 60px; height: 38px; display: block; margin: 1px 0 6px; }
.f-top .help { margin-top: 12px; }
.legend { display: flex; align-items: center; gap: 4px; width: 357px; height: 14px; margin-top: -6px; white-space: nowrap; }
.legend hr { flex: 1; margin: 0; border: 0; border-top: 1px solid #999; }
.f-aniso { display: flex; height: 68px; align-items: flex-start; padding-left: 4px; }
.axes { width: 206px; padding-top: 12px; white-space: nowrap; }
.heads { display: flex; gap: 2px; height: 16px; line-height: 16px; padding-left: 50px; }
.dirs { display: grid; grid-template-columns: 44px 50px 50px 50px; column-gap: 2px; grid-template-rows: 20px 20px; align-items: center; }
.dirs .dip { text-align: right; padding-right: 4px; }
.compass { width: 74px; height: 66px; flex: none; }
.compass text { font: 9px "Liberation Serif", serif; fill: #000; }
.slide { appearance: none; writing-mode: vertical-lr; width: 21px; height: 66px; margin: 1px 0 0 3px; background: linear-gradient(#e4e4e4, #e4e4e4) center / 4px 100% no-repeat; }
.slide::-webkit-slider-thumb { appearance: none; width: 20px; height: 11px; background: #0078d7; clip-path: polygon(0 0, 70% 0, 100% 50%, 70% 100%, 0 100%); }
.ticks { width: 4px; height: 58px; margin: 5px 0 0; background: repeating-linear-gradient(#bbb 0 1px, transparent 1px 5px); }
.scale { width: 30px; display: grid; text-align: center; margin-left: 1px; font: 11px/14px "Liberation Sans", sans-serif; }
.f-aniso .help { margin-top: 48px; }
.f-opt { display: flex; align-items: center; height: 26px; padding-left: 8px; }
.simbox { margin: 28px 0 -1px; }
.dlg-foot { position: relative; height: 31px; display: flex; gap: 8px; padding: 4px 27px 0 0; justify-content: flex-end; }
.dlg-foot .tb { width: 73px; display: flex; align-items: center; gap: 1px; padding: 0 3px; }
.resize { position: absolute; right: 2px; bottom: 2px; width: 9px; height: 9px; background: radial-gradient(circle at 1px 1px, #aaa 1px, transparent 1px) 0 0 / 3px 3px; clip-path: polygon(100% 0, 100% 100%, 0 100%); }

.marks { position: absolute; left: 0; top: 0; width: 100%; height: 100%; pointer-events: none; }
.note { position: absolute; left: 322px; top: 1007px; font: 24px/32px "Noto Sans CJK SC", sans-serif; color: #f22; text-shadow: 1px 0 #fff, -1px 0 #fff, 0 1px #fff, 0 -1px #fff, 3px 3px 3px rgba(0,0,0,.6); white-space: nowrap; }
```
FILE: logs.js
```js
// Well-log bars: each band is [top, bottom, left], drawn row by row up to the well path.
const wells = [
  { x: y => 1243 + (y - 500) * 0.0847, from: 551, to: 960, base: 3, bands: [
    [551,567,1229],[569,579,1231],[588,594,1234],[598,611,1231],[619,621,1232],[624,633,1234],[635,644,1234],
    [650,656,1236],[658,660,1235],[662,665,1233],[665,672,1236],[672,690,1239],[690,699,1237],[700,704,1240],
    [704,710,1244],[712,716,1245],[730,744,1244],[747,755,1246],[762,769,1248],[774,779,1249],[787,790,1251],
    [794,799,1251],[809,816,1252],[822,827,1254],[828,831,1252],[833,838,1254],[842,844,1256],[848,852,1256],
    [859,862,1258],[869,874,1258],[887,889,1261],[895,910,1260],[911,915,1262],[916,939,1260],[943,945,1266],[953,956,1269]] },
  { x: y => 754 + (y - 785) * 0.173, from: 785, to: 1030, base: 4, bands: [
    [830,840,754],[846,858,754],[863,867,755],[902,905,759],[912,914,764],[933,940,767],[942,965,771],
    [971,980,771],[988,1008,774],[1020,1024,783]] },
  { x: y => 754 + (y - 929) * 0.176, from: 945, to: 1080, base: 5, bands: [
    [1000,1015,763],[1030,1066,770],[1072,1075,756]] },
  { x: y => 703 + (y - 485) * 0.17, from: 475, to: 485, base: 3, bands: [] }
];
let d = "";
for (const w of wells) {
  for (let y = w.from; y <= w.to; y++) {
    const right = Math.round(w.x(y));
    let left = right - w.base + (y * 7 % 3);
    const band = w.bands.find(b => y >= b[0] && y <= b[1]);
    if (band) left = Math.min(left, band[2] + (y * 5 % 7));
    d += `M${left} ${y}.5H${right}`;
  }
}
document.getElementById("logs").setAttribute("d", d);
```
